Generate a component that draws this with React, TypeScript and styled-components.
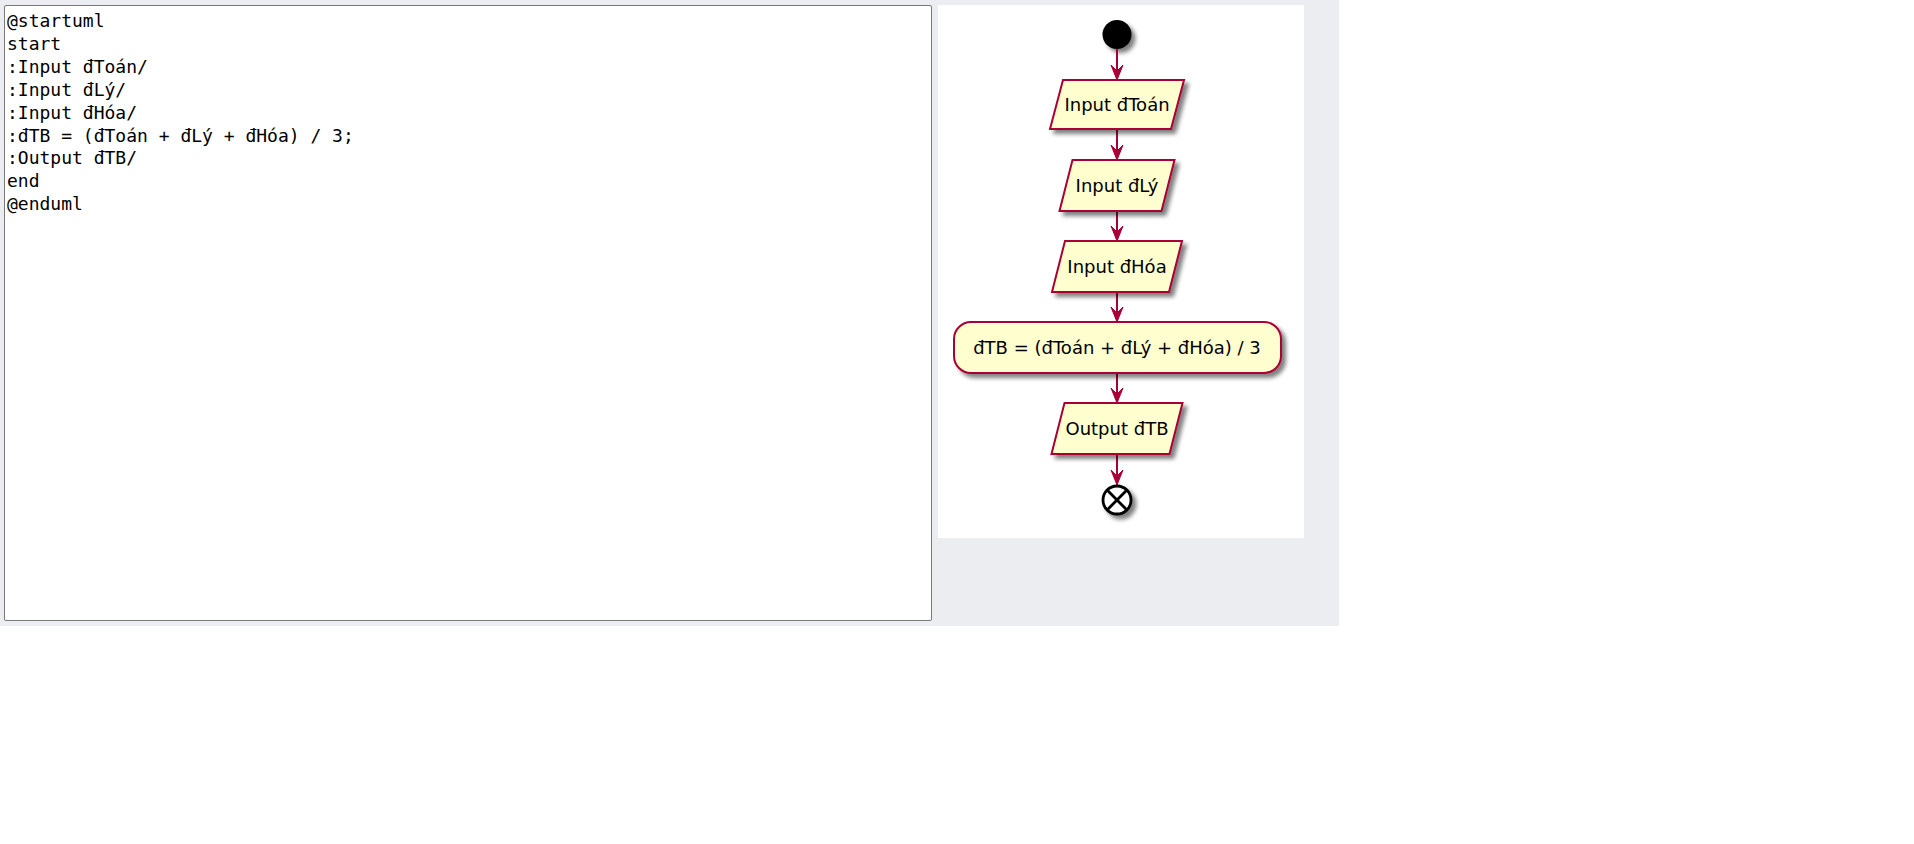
import React from "react";
import styled, { createGlobalStyle } from "styled-components";

const GlobalStyle = createGlobalStyle`
  html, body {
    margin: 0;
    padding: 0;
    background: #ffffff;
  }
  body {
    font-family: "DejaVu Sans", sans-serif;
  }
`;

const Workspace = styled.div`
  display: flex;
  align-items: flex-start;
  gap: 6px;
  width: 1339px;
  height: 626px;
  box-sizing: border-box;
  padding: 5px 0 0 4px;
  background: #ecedf1;
`;

const CodeEditor = styled.textarea`
  display: block;
  flex: none;
  box-sizing: border-box;
  width: 928px;
  height: 616px;
  margin: 0;
  padding: 4px 2px 2px 2px;
  border: 1px solid #7a7a7a;
  border-radius: 2px;
  background: #ffffff;
  color: #000000;
  font-family: "DejaVu Sans Mono", "Liberation Mono", monospace;
  font-size: 18px;
  line-height: 22.9px;
  resize: none;
  outline: none;
  overflow: hidden;
  white-space: pre;
`;

const DiagramPanel = styled.div`
  flex: none;
  width: 366px;
  height: 533px;
  background: #ffffff;
`;

const Chart = styled.svg`
  display: block;
  width: 366px;
  height: 533px;
`;

const Label = styled.text`
  font-family: "DejaVu Sans", "Noto Sans", sans-serif;
  font-size: 18px;
  fill: #000000;
`;

const BORDER = "#A80036";
const FILL = "#FEFECE";
const CX = 179;

const code = `@startuml
start
:Input đToán/
:Input đLý/
:Input đHóa/
:đTB = (đToán + đLý + đHóa) / 3;
:Output đTB/
end
@enduml`;

type InputNodeProps = { top: number; bottom: number; width: number; label: string };

const SLANT = 13;

function InputNode({ top, bottom, width, label }: InputNodeProps) {
  const h = width / 2;
  const s = SLANT / 2;
  const pts = [
    [CX - h + s, top],
    [CX + h + s, top],
    [CX + h - s, bottom],
    [CX - h - s, bottom],
  ]
    .map((p) => p.join(","))
    .join(" ");
  const mid = (top + bottom) / 2;
  return (
    <g>
      <polygon
        points={pts}
        fill={FILL}
        stroke={BORDER}
        strokeWidth={2}
        filter="url(#shadow)"
      />
      <Label x={CX} y={mid + 6.5} textAnchor="middle">
        {label}
      </Label>
    </g>
  );
}

type ActionNodeProps = { top: number; bottom: number; left: number; right: number; label: string };

function ActionNode({ top, bottom, left, right, label }: ActionNodeProps) {
  const mid = (top + bottom) / 2;
  return (
    <g>
      <rect
        x={left}
        y={top}
        width={right - left}
        height={bottom - top}
        rx={17}
        ry={17}
        fill={FILL}
        stroke={BORDER}
        strokeWidth={2}
        filter="url(#shadow)"
      />
      <Label x={CX} y={mid + 6.5} textAnchor="middle">
        {label}
      </Label>
    </g>
  );
}

function Arrow({ from, to }: { from: number; to: number }) {
  const head = `${CX - 6},${to - 15} ${CX},${to} ${CX + 6},${to - 15} ${CX},${to - 9}`;
  return (
    <g>
      <line x1={CX} y1={from} x2={CX} y2={to - 4} stroke={BORDER} strokeWidth={2} />
      <polygon points={head} fill={BORDER} stroke={BORDER} strokeWidth={1} strokeLinejoin="round" />
    </g>
  );
}

const inputs: InputNodeProps[] = [
  { top: 75, bottom: 124, width: 121, label: "Input đToán" },
  { top: 155, bottom: 206, width: 102, label: "Input đLý" },
  { top: 236, bottom: 287, width: 117, label: "Input đHóa" },
];

const arrows = [
  { from: 44, to: 75 },
  { from: 124, to: 155 },
  { from: 206, to: 236 },
  { from: 287, to: 317 },
  { from: 368, to: 398 },
  { from: 449, to: 480 },
];

function Flowchart() {
  const endR = 14;
  const d = endR * 0.7071;
  return (
    <Chart viewBox="0 0 366 533">
      <defs>
        <filter id="shadow" x="-20%" y="-30%" width="150%" height="170%">
          <feGaussianBlur in="SourceAlpha" stdDeviation="2.2" />
          <feOffset dx="4" dy="4" result="off" />
          <feComponentTransfer>
            <feFuncA type="linear" slope="0.5" />
          </feComponentTransfer>
          <feMerge>
            <feMergeNode />
            <feMergeNode in="SourceGraphic" />
          </feMerge>
        </filter>
      </defs>

      <circle cx={CX} cy={29.5} r={14.5} fill="#000000" filter="url(#shadow)" />

      {arrows.map((a) => (
        <Arrow key={a.from} from={a.from} to={a.to} />
      ))}

      {inputs.map((n) => (
        <InputNode key={n.label} {...n} />
      ))}

      <ActionNode top={317} bottom={368} left={16} right={343} label="đTB = (đToán + đLý + đHóa) / 3" />

      <InputNode top={398} bottom={449} width={118} label="Output đTB" />

      <g filter="url(#shadow)">
        <circle cx={CX} cy={495} r={endR} fill="#ffffff" stroke="#000000" strokeWidth={2.8} />
        <line x1={CX - d} y1={495 - d} x2={CX + d} y2={495 + d} stroke="#000000" strokeWidth={2.8} />
        <line x1={CX + d} y1={495 - d} x2={CX - d} y2={495 + d} stroke="#000000" strokeWidth={2.8} />
      </g>
    </Chart>
  );
}

export default function App() {
  return (
    <>
      <GlobalStyle />
      <Workspace>
        <CodeEditor readOnly spellCheck={false} defaultValue={code} />
        <DiagramPanel>
          <Flowchart />
        </DiagramPanel>
      </Workspace>
    </>
  );
}
